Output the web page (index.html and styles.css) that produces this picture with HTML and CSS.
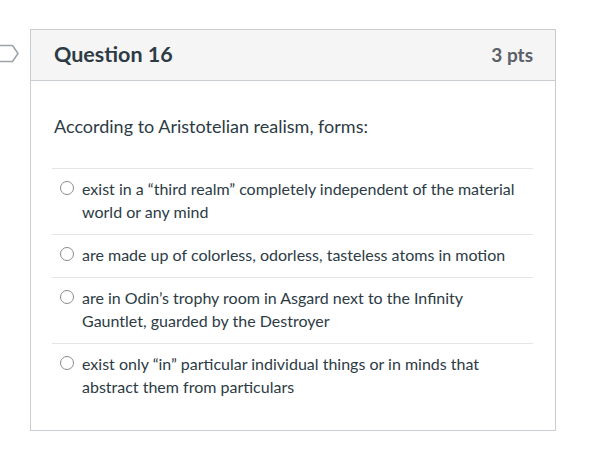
FILE: index.html
```html
<!DOCTYPE html>
<html lang="en">
<head>
<meta charset="utf-8">
<title>Question 16</title>
<link rel="stylesheet" href="styles.css">
</head>
<body>
<div class="page">
  <div class="flag">
    <svg width="20" height="20" viewBox="0 0 20 20" aria-hidden="true">
      <path d="M-2 1.5 H12.5 L18 9.5 L12.5 17.5 H-2" fill="none" stroke="#9aa3ab" stroke-width="1.5" stroke-linejoin="round"/>
    </svg>
  </div>
  <div class="question">
    <div class="header">
      <h2 class="title">Question 16</h2>
      <span class="pts">3 pts</span>
    </div>
    <div class="body">
      <p class="text">According to Aristotelian realism, forms:</p>
      <div class="answers">
        <label class="answer"><span class="radio"></span><span class="label">exist in a “third realm” completely independent of the material world or any mind</span></label>
        <label class="answer"><span class="radio"></span><span class="label">are made up of colorless, odorless, tasteless atoms in motion</span></label>
        <label class="answer"><span class="radio"></span><span class="label">are in Odin’s trophy room in Asgard next to the Infinity Gauntlet, guarded by the Destroyer</span></label>
        <label class="answer"><span class="radio"></span><span class="label">exist only “in” particular individual things or in minds that abstract them from particulars</span></label>
      </div>
    </div>
  </div>
</div>
</body>
</html>
```

FILE: styles.css
```css
html, body {
  margin: 0;
  padding: 0;
  background: #ffffff;
}

body {
  font-family: Lato, "Open Sans", "Liberation Sans", sans-serif;
  color: #2d3b45;
}

.page {
  display: flex;
  align-items: flex-start;
  padding-top: 29px;
}

.flag {
  width: 30px;
  flex: none;
  margin-top: 15px;
  height: 20px;
}

.flag svg {
  display: block;
}

.question {
  width: 524px;
  border: 1px solid #c7cdd1;
  background: #ffffff;
}

.header {
  display: flex;
  align-items: center;
  justify-content: space-between;
  height: 48px;
  padding: 0 22px 2px 23px;
  background: #f5f5f5;
  border-bottom: 1px solid #c7cdd1;
}

.title {
  margin: 0;
  font-size: 21.5px;
  font-weight: 700;
  color: #2d3b45;
}

.pts {
  font-size: 19px;
  font-weight: 700;
  color: #5b6166;
}

.body {
  padding: 32px 22px 21px 21px;
}

.text {
  margin: 0 0 28px 2px;
  font-size: 18px;
  line-height: 27px;
}

.answers {
  display: flex;
  flex-direction: column;
}

.answer {
  display: flex;
  align-items: flex-start;
  padding: 8px 12px 11px 8px;
  border-top: 1px solid #e3e5e7;
  font-size: 16px;
  line-height: 23px;
}

.radio {
  flex: none;
  width: 12px;
  height: 12px;
  margin-top: 4px;
  margin-right: 8px;
  border: 1.5px solid #8b8b8b;
  border-radius: 50%;
}

.label {
  display: block;
}
```
